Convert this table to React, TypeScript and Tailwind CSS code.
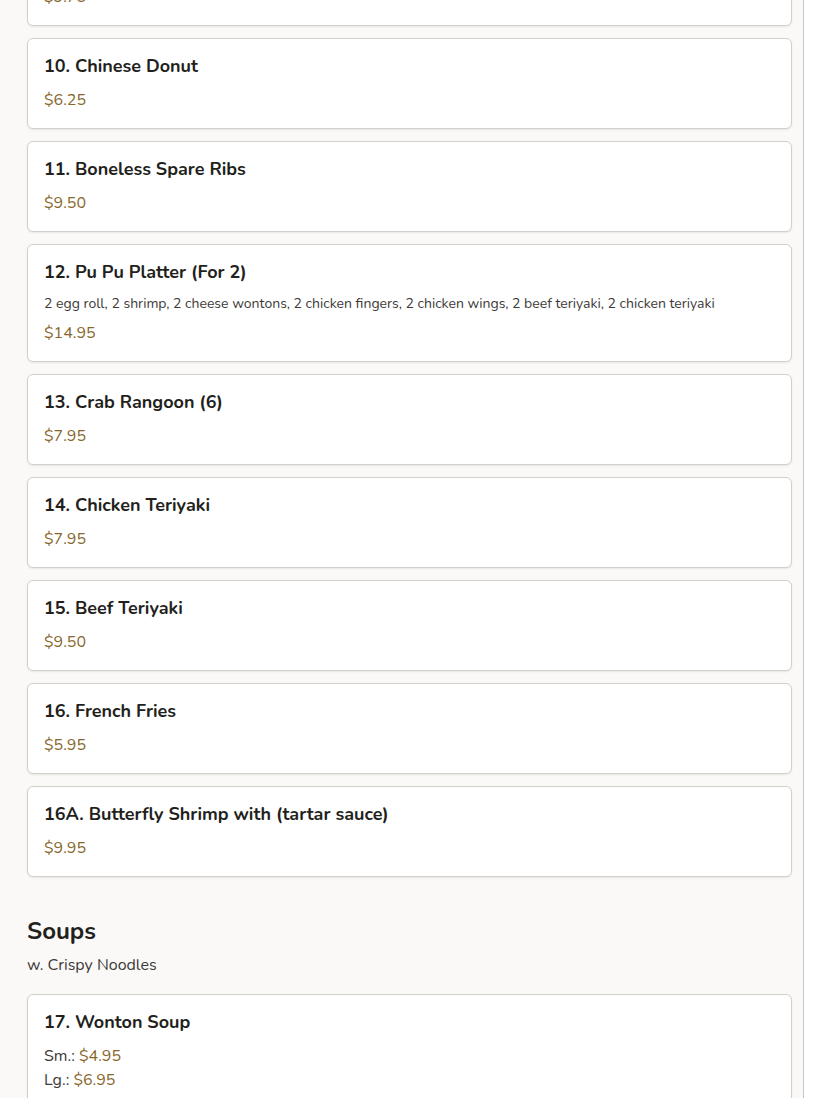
import React from "react";

type Item = { title: string; desc?: string; price?: string; sizes?: { label: string; price: string }[] };

const items: Item[] = [
  { title: "10. Chinese Donut", price: "$6.25" },
  { title: "11. Boneless Spare Ribs", price: "$9.50" },
  {
    title: "12. Pu Pu Platter (For 2)",
    desc: "2 egg roll, 2 shrimp, 2 cheese wontons, 2 chicken fingers, 2 chicken wings, 2 beef teriyaki, 2 chicken teriyaki",
    price: "$14.95",
  },
  { title: "13. Crab Rangoon (6)", price: "$7.95" },
  { title: "14. Chicken Teriyaki", price: "$7.95" },
  { title: "15. Beef Teriyaki", price: "$9.50" },
  { title: "16. French Fries", price: "$5.95" },
  { title: "16A. Butterfly Shrimp with (tartar sauce)", price: "$9.95" },
];

function Card({ item }: { item: Item }) {
  return (
    <div className="bg-white border border-[#d3d0cc] rounded-[6px] shadow-[0_1px_2px_rgba(0,0,0,0.08)] px-4 pt-4 pb-4">
      <h3
        className={
          "text-[18px] leading-[22px] font-bold text-[#231f1c] " + (item.desc ? "mb-[10px]" : "mb-[11px]")
        }
      >
        {item.title}
      </h3>
      {item.desc && <p className="text-[14px] leading-[21px] text-[#3d3a37] mb-[7px]">{item.desc}</p>}
      {item.price && <div className="text-[16px] leading-[24px] text-[#87672c]">{item.price}</div>}
      {item.sizes && (
        <div className="flex flex-col">
          {item.sizes.map((s) => (
            <div key={s.label} className="text-[16px] leading-[24px] text-[#3d3a37]">
              {s.label} <span className="text-[#87672c]">{s.price}</span>
            </div>
          ))}
        </div>
      )}
    </div>
  );
}

export default function App() {
  return (
    <div className="w-[824px] h-[1098px] overflow-hidden bg-white" style={{ fontFamily: "Nunito, Lato, 'Noto Sans', sans-serif" }}>
      <div className="w-[804px] min-h-[1200px] bg-[#faf9f7] border-r border-[#c9c6c2] pl-[27px] pr-[11px] -mt-[65px]">
        <div className="flex flex-col gap-[12px]">
          <Card item={{ title: "9. Fried Wonton (10)", price: "$9.75" }} />
          {items.map((it) => (
            <Card key={it.title} item={it} />
          ))}
        </div>
        <div className="mt-[38px]">
          <h2 className="text-[24px] leading-[32px] font-bold text-[#231f1c]">Soups</h2>
          <p className="text-[16px] leading-[24px] text-[#3d3a37] mt-[6px] mb-[17px]">w. Crispy Noodles</p>
          <div className="flex flex-col gap-[12px]">
            <Card
              item={{
                title: "17. Wonton Soup",
                sizes: [
                  { label: "Sm.:", price: "$4.95" },
                  { label: "Lg.:", price: "$6.95" },
                ],
              }}
            />
          </div>
        </div>
      </div>
    </div>
  );
}
